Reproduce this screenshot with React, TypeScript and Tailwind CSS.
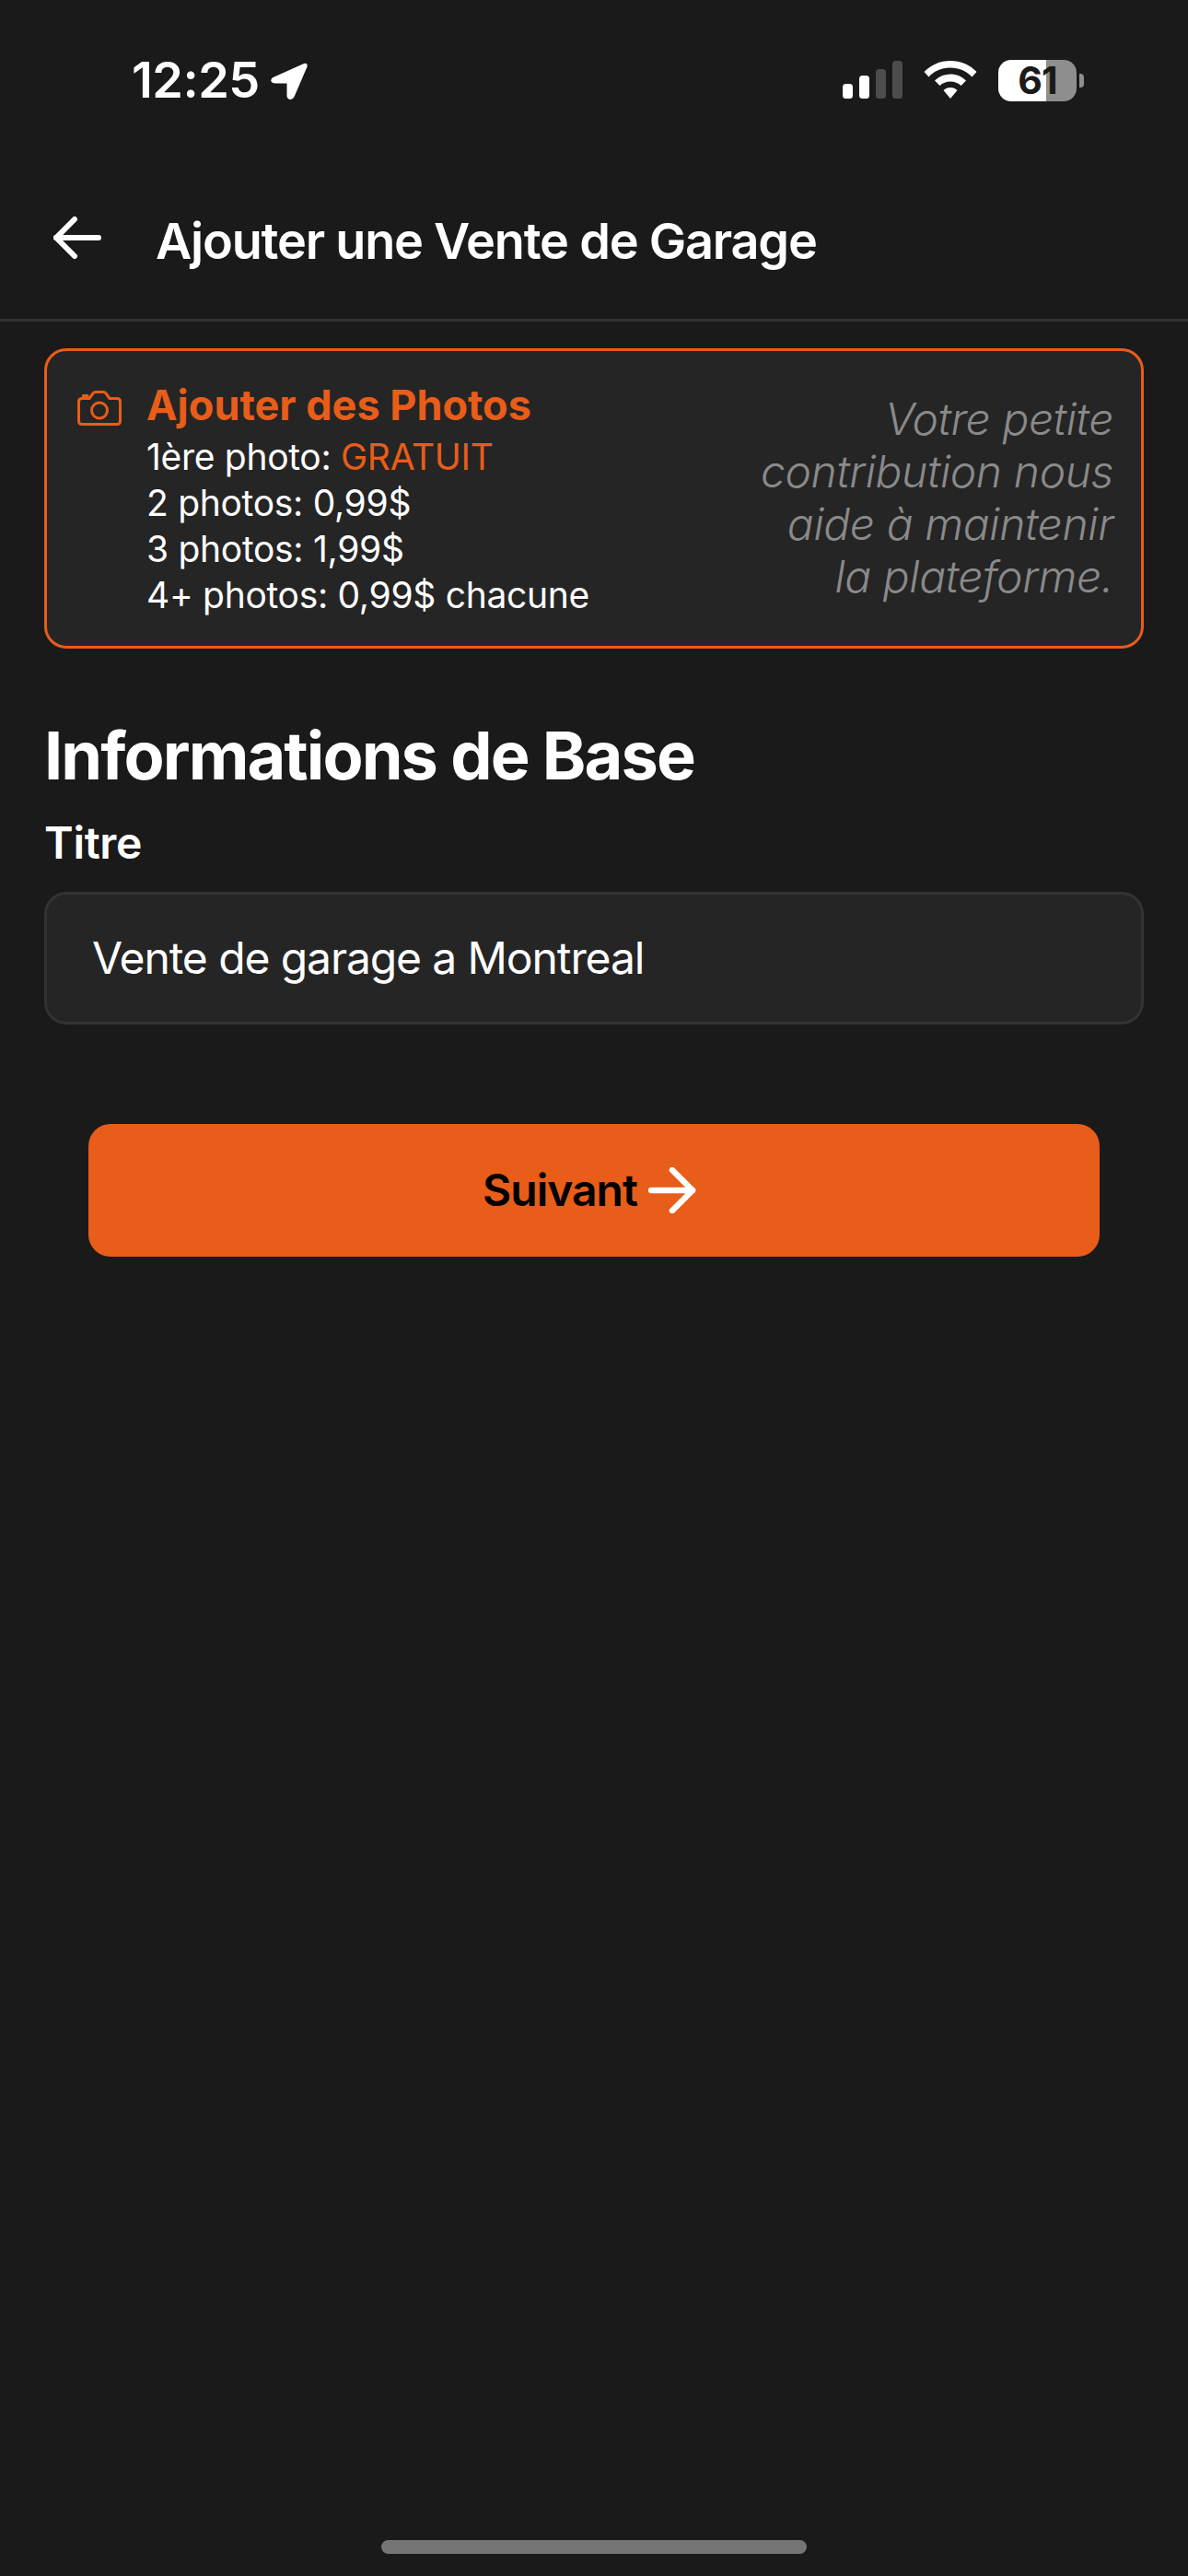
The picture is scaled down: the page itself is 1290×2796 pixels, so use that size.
const F = "[font-family:Inter,'Liberation_Sans',sans-serif]";

function StatusBar() {
  return (
    <div className="flex h-[174px] items-start justify-between pl-[143px] pr-[113px] pt-[56px]">
      <div className="flex h-[62px] items-center gap-[11px]">
        <span className="text-[54px] leading-[62px] font-semibold text-white tracking-[-0.5px]">12:25</span>
        <svg width="42" height="42" viewBox="0 0 42 42" className="mt-[2px]">
          <path d="M37 2 L3.500 17 Q0.500 19 1.500 21.500 Q2.500 23.500 6 23.500 L18.500 23.500 L18.500 37 Q19 41 22.500 41 Q25 41 26.500 38 L40.500 5.500 Q41.500 1 37 2 Z" fill="white" />
        </svg>
      </div>
      <div className="flex h-[62px] items-center">
        <svg width="65" height="42" viewBox="0 0 65 42" className="mr-[23px]">
          <rect x="0" y="25" width="11" height="16" rx="3.500" fill="#fff" />
          <rect x="18" y="16" width="11" height="25" rx="3.500" fill="#fff" />
          <rect x="36" y="9" width="11" height="32" rx="3.500" fill="#4d4d4d" />
          <rect x="54" y="0" width="11" height="41" rx="3.500" fill="#4d4d4d" />
        </svg>
        <svg width="58" height="42" viewBox="0 0 58 42" className="mr-[23px]">
          <path d="M29 0 C18 0 8 4 0.500 12 L5.500 17.500 C11.500 11 20 7.500 29 7.500 C38 7.500 46.500 11 52.500 17.500 L57.500 12 C50 4 40 0 29 0 Z" fill="#fff" />
          <path d="M29 14.500 C22.500 14.500 16.500 17 12 21.500 L17.500 27 C20.500 24 24.500 22.500 29 22.500 C33.500 22.500 37.500 24 40.500 27 L46 21.500 C41.500 17 35.500 14.500 29 14.500 Z" fill="#fff" />
          <path d="M29 29 C26 29 23.500 30 21.500 32 L29 41 L36.500 32 C34.500 30 32 29 29 29 Z" fill="#fff" />
        </svg>
        <div className="relative flex h-[45px] w-[85px]">
          <div className="w-[52px] rounded-l-[14px] bg-white" />
          <div className="flex-1 rounded-r-[14px] bg-[#8e8e8e]" />
          <span className="absolute inset-0 flex items-center justify-center text-[41px] leading-[45px] font-bold tracking-[-1px] text-[#1a1a1a]">61</span>
        </div>
        <div className="ml-[3px] h-[15px] w-[5px] rounded-r-[4px] bg-[#8e8e8e]" />
      </div>
    </div>
  );
}

export default function App() {
  return (
    <div className={`${F} flex h-[2796px] w-[1290px] flex-col overflow-hidden bg-[#1a1a1a] text-white`}>
      <StatusBar />
      <div className="flex h-[175px] items-center border-b-[3px] border-[#333333] pl-[58px]">
        <svg width="52" height="46" viewBox="0 0 52 46" fill="none" stroke="white" strokeWidth="6" strokeLinecap="round" strokeLinejoin="round" className="mt-[-4px]">
          <path d="M49 23 H3" />
          <path d="M23 3 L3 23 L23 43" />
        </svg>
        <span className="ml-[59px] mt-[3px] text-[54px] leading-[64px] font-semibold tracking-[-1.2px]">Ajouter une Vente de Garage</span>
      </div>
      <div className="flex flex-col px-[48px] pt-[29px]">
        <div className="flex h-[326px] items-start justify-between rounded-[24px] border-[3px] border-[#e85d19] bg-[#252525] pl-[33px] pr-[30px] pt-[27px]">
          <div className="flex items-start">
            <svg width="48" height="38" viewBox="0 0 48 38" fill="none" stroke="#e85d19" strokeWidth="3" strokeLinejoin="round" className="mt-[16px]">
              <path d="M5 8.500 H13 L17 3 Q18 1.500 20 1.500 H28 Q30 1.500 31 3 L35 8.500 H43 Q46.500 8.500 46.500 12 V33 Q46.500 36.500 43 36.500 H5 Q1.500 36.500 1.500 33 V12 Q1.500 8.500 5 8.500 Z" />
              <circle cx="24" cy="21.500" r="8.500" />
              <path d="M6.500 7 V5.500 H11 V7" />
            </svg>
            <div className="ml-[27px] flex flex-col">
              <div className="text-[45px] leading-[63px] font-bold text-[#e85d19]">Ajouter des Photos</div>
              <div className="text-[39px] leading-[50px] tracking-[-0.3px]">1ère photo: <span className="text-[#e85d19]">GRATUIT</span></div>
              <div className="text-[39px] leading-[50px] tracking-[-0.3px]">2 photos: 0,99$</div>
              <div className="text-[39px] leading-[50px] tracking-[-0.3px]">3 photos: 1,99$</div>
              <div className="text-[39px] leading-[50px] tracking-[-0.3px]">4+ photos: 0,99$ chacune</div>
            </div>
          </div>
          <div className="mt-[18px] w-[400px] text-right text-[48px] leading-[57px] italic font-light tracking-[-0.4px] text-[#8a8a8a]">
            Votre petite contribution nous aide à maintenir la plateforme.
          </div>
        </div>
        <div className="mt-[74px] text-[72px] leading-[84px] font-bold tracking-[-1.9px]">Informations de Base</div>
        <div className="mt-[23px] text-[48px] leading-[60px] font-semibold tracking-[-0.3px]">Titre</div>
        <div className="mt-[23px] flex h-[144px] items-center rounded-[24px] border-[3px] border-[#333333] bg-[#252525] pl-[49px] text-[48px] tracking-[-1.1px]">
          Vente de garage a Montreal
        </div>
        <div className="mx-[48px] mt-[108px] flex h-[144px] items-center justify-center gap-[12px] rounded-[24px] bg-[#e85d19] pr-[10px]">
          <span className="text-[48px] font-semibold tracking-[-1px] text-black">Suivant</span>
          <svg width="52" height="50" viewBox="0 0 52 50" fill="none" stroke="white" strokeWidth="6.500" strokeLinecap="round" strokeLinejoin="round">
            <path d="M3 25 H48" />
            <path d="M26 3 L48 25 L26 47" />
          </svg>
        </div>
      </div>
      <div className="mt-auto flex justify-center pb-[24px]">
        <div className="h-[15px] w-[462px] rounded-full bg-[#757575]" />
      </div>
    </div>
  );
}
